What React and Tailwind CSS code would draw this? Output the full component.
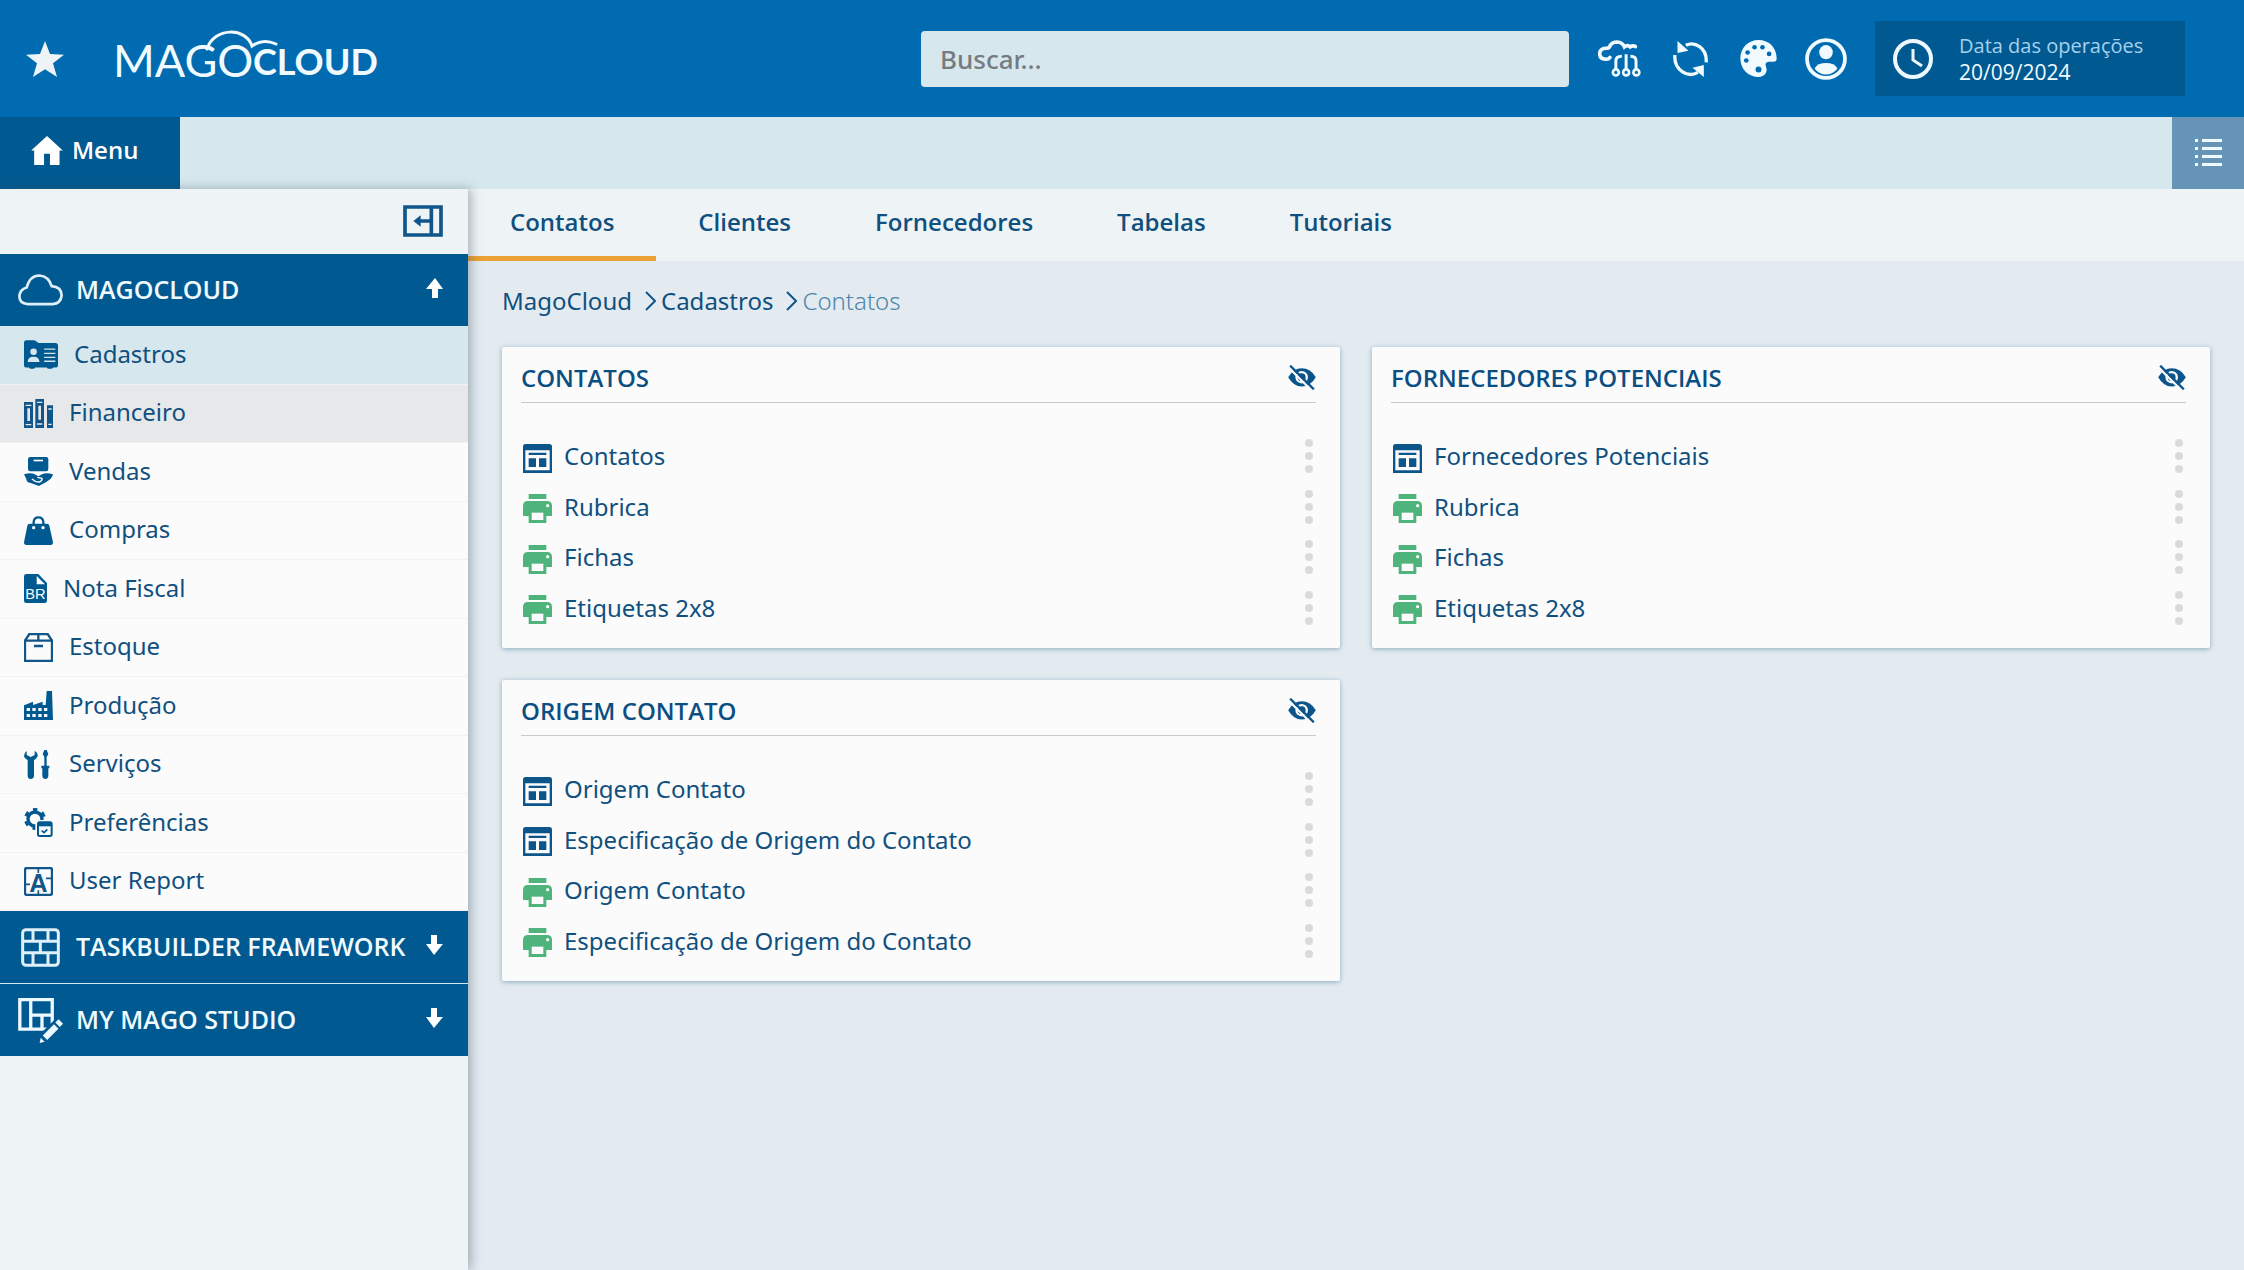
import React, { useState } from 'react';

const StarIcon = () => (
  <svg viewBox="0 0 114 108" className="w-[38px] h-9" fill="#eef3f6">
    <path d="M57 0 72 39 114 41 81 67 93 108 57 85 21 108 33 67 0 41 42 39Z" />
  </svg>
);

const Logo = () => (
  <svg viewBox="0 0 280 70" className="w-[280px] h-[70px]" role="img" aria-label="MagoCloud">
    <g fill="#f1fbff" fontFamily="Lato, sans-serif">
      <text x="3" y="53" fontSize="45" fontWeight="400">MAGO</text>
      <text x="143" y="51" fontSize="36" fontWeight="700">CLOUD</text>
    </g>
    <path
      d="M97 25C104 3 136 3 142 22Q153 14 166 20"
      fill="none"
      stroke="#f1fbff"
      strokeWidth="3"
      strokeLinecap="round"
    />
  </svg>
);

const CloudNetIcon = () => (
  <svg viewBox="0 0 130 110" className="w-[43px] h-[37px]" fill="none" stroke="#f1fbff" strokeWidth="11" strokeLinecap="round">
    <path d="M36 52Q32 58 22 57Q5 56 5 40Q6 24 25 24Q34 24 36 17Q42 5 58 5Q74 6 80 20Q90 12 97 20Q106 14 113 19" />
    <path strokeWidth="9" strokeLinecap="butt" d="M54 88V62Q54 48 72 48M85 42V88M98 48Q115 48 115 62V88" />
    <g strokeWidth="8">
      <circle cx="54" cy="97" r="9" />
      <circle cx="85" cy="97" r="9" />
      <circle cx="116" cy="97" r="9" />
    </g>
  </svg>
);

const SyncIcon = () => (
  <svg viewBox="0 0 104 108" className="w-[35px] h-9">
    <path d="M38 13C64 0 102 20 99 64M5 42C2 88 44 112 74 94" fill="none" stroke="#f1fbff" strokeWidth="10" />
    <path d="M13 0V36L46 29ZM92 108V72L58 80Z" fill="#f1fbff" />
  </svg>
);

const PaletteIcon = () => (
  <svg viewBox="0 0 110 112" className="w-[37px] h-[37px]">
    <path fill="#f1fbff" d="M55 0C88 0 110 24 110 56Q110 66 100 66H86Q72 68 78 82C84 98 72 112 56 112C24 112 0 88 0 56C0 24 24 0 55 0Z" />
    <g fill="#006bb0">
      <circle cx="22" cy="38" r="7" />
      <circle cx="43" cy="22" r="7" />
      <circle cx="67" cy="22" r="7" />
      <circle cx="87" cy="42" r="7" />
      <circle cx="18" cy="62" r="7" />
      <circle cx="55" cy="89" r="9" />
    </g>
  </svg>
);

const UserIcon = () => (
  <svg viewBox="0 0 124 124" className="w-[42px] h-[42px]" fill="#f1fbff">
    <circle cx="62" cy="62" r="56" fill="none" stroke="#f1fbff" strokeWidth="11" />
    <ellipse cx="62" cy="42" rx="20" ry="21" />
    <path d="M28 90Q38 74 62 74Q86 74 96 90Q82 108 62 108Q42 108 28 90Z" />
  </svg>
);

const ClockIcon = () => (
  <svg viewBox="0 0 40 40" className="w-10 h-10" fill="none" stroke="#eef8ff" strokeWidth="4">
    <circle cx="20" cy="20" r="18" />
    <path strokeWidth="3" d="M20 10V21L29 27" />
  </svg>
);

const HomeIcon = () => (
  <svg viewBox="0 0 96 88" className="w-8 h-[29px]" fill="#fff">
    <path d="M48 0 96 44H86V88H57V54H39V88H9V44H0Z" />
  </svg>
);

const ListIcon = () => (
  <svg viewBox="0 0 27 27" className="w-[27px] h-[27px]" fill="#f1fbff">
    <path d="M0 0h3v3H0zM7 0h20v3H7zM0 8h3v3H0zM7 8h20v3H7zM0 16h3v3H0zM7 16h20v3H7zM0 24h3v3H0zM7 24h20v3H7z" />
  </svg>
);

const CollapseIcon = () => (
  <svg viewBox="0 0 120 96" className="w-10 h-8">
    <path d="M6 6H114V90H6ZM85 6V90" fill="none" stroke="#10568a" strokeWidth="11" />
    <path d="M31 48 53 31V43H82V53H53V65Z" fill="#10568a" />
  </svg>
);

const CloudIcon = () => (
  <svg viewBox="0 0 135 95" className="w-[45px] h-8 shrink-0" fill="none" stroke="#dff0fa" strokeWidth="8">
    <path d="M29 90Q4 88 4 65Q6 46 26 40Q36 4 64 4Q92 6 101 36Q130 38 131 64Q128 88 104 90Z" />
  </svg>
);

const BricksIcon = () => (
  <svg viewBox="0 0 117 117" className="w-[39px] h-[39px] mx-[3px] shrink-0" fill="none" stroke="#dff0fa" strokeWidth="9">
    <rect x="5" y="5" width="107" height="107" rx="10" />
    <path d="M4 40H113M4 74H113M36 4V40M81 4V40M58 40V74M36 74V113M81 74V113" />
  </svg>
);

const StudioIcon = () => (
  <svg viewBox="0 0 135 136" className="w-[45px] h-[45px] shrink-0" fill="none" stroke="#eef8ff" strokeWidth="10">
    <path d="M5 5H103V94H5ZM38 5V94M38 52H103M72 52V94" />
    <path d="M64 134 128 70" stroke="#005a91" strokeWidth="32" />
    <path d="M81 120 115 86" strokeWidth="19" />
    <path d="M119 81 129 71" strokeWidth="19" />
    <path d="M65 136 68 120 80 132Z" fill="#eef8ff" stroke="none" />
  </svg>
);

const ArrowIcon = ({ up }) => (
  <svg viewBox="0 0 17 20" className={up ? 'w-[17px] h-5' : 'w-[17px] h-5 rotate-180'} fill="#fff">
    <path d="M9 0 17 11H12V20H6V11H0Z" />
  </svg>
);

const CadastrosIcon = () => (
  <svg viewBox="0 0 103 87" className="w-[34px] h-[29px]" fill="#005a91">
    <path d="M6 0H32L44 9H95Q103 9 103 17V75Q103 83 95 83H88Q86 87 82 87H76Q70 87 69 83H34Q32 87 28 87H22Q16 87 15 83H8Q0 83 0 75V8Q0 0 6 0Z" />
    <g fill="#d6e7ee">
      <circle cx="29" cy="35" r="10" />
      <path d="M11 66Q12 50 29 50Q46 50 47 66Z" />
      <path d="M61 25h34v4H61zM61 38h34v4H61zM61 50h34v4H61zM61 62h34v4H61z" />
    </g>
  </svg>
);

const FinanceiroIcon = () => (
  <svg viewBox="0 0 87 87" className="w-[29px] h-[29px]" fill="#10568a">
    <path d="M0 9H27V87H0ZM34 0H60V87H34ZM69 19H87V87H69Z" />
    <path fill="#e6e8ea" d="M5 17h17v4H5zM10 28h8v38h-8zM5 75h17v4H5zM39 8h16v4H39zM43 20h8v42h-8zM39 73h16v4H39zM73 28h10v4H73zM73 74h10v4H73z" />
  </svg>
);

const VendasIcon = () => (
  <svg viewBox="0 0 87 87" className="w-[29px] h-[29px]" fill="#005a91">
    <rect x="12" y="0" width="61" height="43" rx="7" />
    <rect x="29" y="8" width="28" height="5" fill="#fbfbfc" />
    <path d="M0 52Q22 46 32 52L43 58L54 52Q66 46 87 52Q84 66 68 74L45 87L18 77Q8 77 7 66Z" />
    <path d="M24 66Q34 76 46 75Q55 72 54 64L40 61" fill="none" stroke="#fbfbfc" strokeWidth="4" />
  </svg>
);

const ComprasIcon = () => (
  <svg viewBox="0 0 87 87" className="w-[29px] h-[29px]" fill="#005a91">
    <path d="M29 28V18Q30 4 43 4Q57 4 58 18V28" fill="none" stroke="#005a91" strokeWidth="7" />
    <path d="M17 23H69Q75 23 76 29L87 79Q87 87 80 87H7Q0 87 0 79L10 29Q11 23 17 23Z" />
    <circle cx="29" cy="35" r="5" fill="#fbfbfc" />
    <circle cx="57" cy="35" r="5" fill="#fbfbfc" />
  </svg>
);

const NotaFiscalIcon = () => (
  <svg viewBox="0 0 69 87" className="w-[23px] h-[29px]" fill="#005a91">
    <path d="M7 0H43L69 27V80Q69 87 62 87H7Q0 87 0 80V7Q0 0 7 0Z" />
    <path d="M38 6V31H63Z" fill="#fbfbfc" />
    <text x="4" y="75" fontSize="44" fontFamily="'Liberation Sans', sans-serif" fill="#fbfbfc">BR</text>
  </svg>
);

const EstoqueIcon = () => (
  <svg viewBox="0 0 87 87" className="w-[29px] h-[29px]" fill="none" stroke="#10568a" strokeWidth="7">
    <path d="M3 23H84V84H3ZM3 23 16 3H71L84 23M43 3V23M30 39H57" />
  </svg>
);

const ProducaoIcon = () => (
  <svg viewBox="0 0 87 87" className="w-[29px] h-[29px]" fill="#005a91">
    <path d="M0 43 27 32V42L56 32V42H65L68 0H84L87 87H0Z" />
    <path fill="#fbfbfc" d="M8 51h10v9H8zM25 51h10v9H25zM43 51h10v9H43zM60 51h10v9H60zM8 69h10v9H8zM25 69h10v9H25zM43 69h10v9H43zM60 69h10v9H60z" />
  </svg>
);

const ServicosIcon = () => (
  <svg viewBox="0 0 87 87" className="w-[29px] h-[29px]" fill="#005a91">
    <path d="M8 3V15L20 21L32 15V3Q42 8 41 19Q39 26 30 31V78Q29 87 20 87Q12 87 11 78V31Q1 26 0 19Q0 8 8 3Z" />
    <path d="M61 0H68L73 12L68 21V47H76V55H73V78Q72 87 64 87Q56 87 55 78V55H52V47H61V21L56 12Z" />
  </svg>
);

const PreferenciasIcon = () => (
  <svg viewBox="0 0 87 87" className="w-[29px] h-[29px]" fill="none" stroke="#005a91">
    <circle cx="33" cy="33" r="21" strokeWidth="10" />
    <circle cx="33" cy="33" r="28" strokeWidth="10" strokeDasharray="14 15.3" strokeDashoffset="7" transform="rotate(-90 33 33)" />
    <rect x="34" y="36" width="53" height="51" fill="#fbfbfc" stroke="none" />
    <rect x="42" y="43" width="41" height="41" rx="5" strokeWidth="6" />
    <path d="M42 50H83" strokeWidth="10" />
    <path d="M53 68 60 74 70 64" strokeWidth="5" />
  </svg>
);

const UserReportIcon = () => (
  <svg viewBox="0 0 87 87" className="w-[29px] h-[29px]" fill="none" stroke="#10568a" strokeWidth="7">
    <rect x="3" y="3" width="81" height="81" rx="6" />
    <path strokeWidth="5" d="M43 3V18M43 70V84M3 52H18M66 34H84" />
    <text x="43" y="74" textAnchor="middle" fontSize="76" fontWeight="700" fontFamily="'Liberation Sans', sans-serif" fill="#10568a" stroke="none">A</text>
  </svg>
);

const FormIcon = () => (
  <svg viewBox="0 0 87 87" className="w-[29px] h-[29px] shrink-0" fill="#0b558b">
    <path fillRule="evenodd" d="M8 0H79Q87 0 87 8V87H0V8Q0 0 8 0ZM7 19V79H80V19Z" />
    <path d="M17 26h53v7H17zM17 43h22v26H17zM48 43h22v26H48z" />
  </svg>
);

const PrintIcon = () => (
  <svg viewBox="0 0 87 87" className="w-[29px] h-[29px] shrink-0" fill="#4fb37c">
    <path d="M17 0H70V15H17ZM15 21H72Q87 21 87 36V66H70V87H17V66H0V36Q0 21 15 21Z" />
    <path fill="#fbfbfc" d="M26 56h35v22H26z" />
    <circle cx="74" cy="35" r="5" fill="#fbfbfc" />
  </svg>
);

const HideIcon = () => (
  <svg viewBox="0 0 84 76" className="w-7 h-[25px]">
    <path d="M0 37Q16 10 41 10Q68 10 84 37Q68 65 41 65Q16 65 0 37Z" fill="#0b558b" />
    <circle cx="41" cy="37" r="19" fill="#fbfbfc" />
    <circle cx="41" cy="37" r="12" fill="#0b558b" />
    <path d="M0 6 70 76" stroke="#fbfbfc" strokeWidth="7" />
    <path d="M6 2 78 74" stroke="#0b558b" strokeWidth="7" />
  </svg>
);

const DotsIcon = () => (
  <svg viewBox="0 0 8 34" className="w-2 h-[34px]" fill="#d9dadb">
    <circle cx="4" cy="4" r="4" />
    <circle cx="4" cy="17" r="4" />
    <circle cx="4" cy="30" r="4" />
  </svg>
);

const ChevronIcon = () => (
  <svg viewBox="0 0 11 20" className="w-[11px] h-5" fill="none" stroke="#10568a" strokeWidth="2">
    <path d="M1 1 10 10 1 19" />
  </svg>
);

const menuItems = [
  { label: 'Cadastros', icon: CadastrosIcon, state: 'active' },
  { label: 'Financeiro', icon: FinanceiroIcon, state: 'hover' },
  { label: 'Vendas', icon: VendasIcon },
  { label: 'Compras', icon: ComprasIcon },
  { label: 'Nota Fiscal', icon: NotaFiscalIcon },
  { label: 'Estoque', icon: EstoqueIcon },
  { label: 'Produção', icon: ProducaoIcon },
  { label: 'Serviços', icon: ServicosIcon },
  { label: 'Preferências', icon: PreferenciasIcon },
  { label: 'User Report', icon: UserReportIcon },
];

const itemBg = {
  active: 'bg-[#d6e7ee]',
  hover: 'bg-[#e6e8ea]',
};

const tabs = ['Contatos', 'Clientes', 'Fornecedores', 'Tabelas', 'Tutoriais'];

const cards = [
  {
    title: 'CONTATOS',
    items: [
      { label: 'Contatos', type: 'form' },
      { label: 'Rubrica', type: 'report' },
      { label: 'Fichas', type: 'report' },
      { label: 'Etiquetas 2x8', type: 'report' },
    ],
  },
  {
    title: 'FORNECEDORES POTENCIAIS',
    items: [
      { label: 'Fornecedores Potenciais', type: 'form' },
      { label: 'Rubrica', type: 'report' },
      { label: 'Fichas', type: 'report' },
      { label: 'Etiquetas 2x8', type: 'report' },
    ],
  },
  {
    title: 'ORIGEM CONTATO',
    items: [
      { label: 'Origem Contato', type: 'form' },
      { label: 'Especificação de Origem do Contato', type: 'form' },
      { label: 'Origem Contato', type: 'report' },
      { label: 'Especificação de Origem do Contato', type: 'report' },
    ],
  },
];

const Header = () => (
  <header className="flex items-center h-[117px] bg-[#006bb0] pl-[26px] pr-[59px]">
    <button type="button" aria-label="Favoritos"><StarIcon /></button>
    <a href="#" className="ml-[46px]"><Logo /></a>
    <input
      type="search"
      aria-label="Buscar"
      placeholder="Buscar..."
      className="ml-auto w-[648px] h-14 px-[19px] rounded bg-[#d6e7ee] font-['Noto_Sans',sans-serif] text-[26px] font-medium text-[#10568a] placeholder:text-[#757b80] outline-none"
    />
    <div className="flex items-center ml-[29px] gap-8">
      <button type="button" aria-label="Conexões"><CloudNetIcon /></button>
      <button type="button" aria-label="Atualizar"><SyncIcon /></button>
      <button type="button" aria-label="Temas"><PaletteIcon /></button>
      <button type="button" aria-label="Usuário" className="-ml-1"><UserIcon /></button>
    </div>
    <button type="button" className="flex items-center ml-7 w-[310px] h-[75px] px-[18px] gap-[26px] bg-[#005a91] text-left">
      <ClockIcon />
      <span className="flex flex-col leading-[26px]">
        <span className="text-xl leading-[26px] text-[#a5d0ee]">Data das operações</span>
        <span className="text-[21px] text-[#f1fbff]">20/09/2024</span>
      </span>
    </button>
  </header>
);

const GroupButton = ({ label, icon: Icon, open, onClick }) => (
  <button
    type="button"
    aria-expanded={open}
    onClick={onClick}
    className="flex items-center w-full h-[72px] pl-[18px] pr-[25px] gap-[13px] bg-[#005a91] text-[25px] font-semibold text-[#f1fbff]"
  >
    <Icon />
    <span className="whitespace-nowrap">{label}</span>
    <span className="ml-auto pb-1"><ArrowIcon up={open} /></span>
  </button>
);

const Sidebar = () => {
  const [open, setOpen] = useState(true);

  return (
    <aside className="relative z-10 w-[468px] shrink-0 bg-[#eef3f6] shadow-[3px_0_10px_rgba(60,80,90,0.4)]">
      <div className="flex items-center justify-end h-[65px] pr-[25px] pb-[2px]">
        <button type="button" aria-label="Recolher menu"><CollapseIcon /></button>
      </div>
      <GroupButton label="MAGOCLOUD" icon={CloudIcon} open={open} onClick={() => setOpen(!open)} />
      {open && (
        <nav className="grid auto-rows-fr min-h-[585px] bg-[#fbfbfc]">
          {menuItems.map(({ label, icon: Icon, state }) => (
            <a
              key={label}
              href="#"
              className={`flex items-center gap-4 pl-6 border-b border-[#f0f2f4] font-['Noto_Sans',sans-serif] text-2xl font-[450] text-[#10507f] ${itemBg[state] ?? ''}`}
            >
              <Icon />
              <span className="pb-[2px]">{label}</span>
            </a>
          ))}
        </nav>
      )}
      <GroupButton label="TASKBUILDER FRAMEWORK" icon={BricksIcon} open={false} />
      <div className="border-t border-[#d6e7ee]">
        <GroupButton label="MY MAGO STUDIO" icon={StudioIcon} open={false} />
      </div>
    </aside>
  );
};

const Card = ({ title, items }) => (
  <section className="pl-[19px] pr-6 pb-[13px] rounded-xs bg-[#fbfbfc] shadow-[0_1px_5px_rgba(0,70,110,0.4)]">
    <div className="flex items-center justify-between h-14 pt-[6px] border-b border-[#c5cbd0]">
      <h2 className="text-2xl font-semibold text-[#0b4f82]">{title}</h2>
      <button type="button" aria-label={`Ocultar ${title}`}><HideIcon /></button>
    </div>
    <ul className="grid auto-rows-fr min-h-[232px] pt-[30px]">
      {items.map((item) => (
        <li key={item.type + item.label} className="flex items-center justify-between pl-[2px] pr-[3px]">
          <a href="#" className="flex items-center gap-3 font-['Noto_Sans',sans-serif] text-2xl font-[450] text-[#10507f]">
            {item.type === 'form' ? <FormIcon /> : <PrintIcon />}
            <span className="pb-1">{item.label}</span>
          </a>
          <button type="button" aria-label={`Opções de ${item.label}`} className="pb-1"><DotsIcon /></button>
        </li>
      ))}
    </ul>
  </section>
);

function App() {
  const [activeTab, setActiveTab] = useState('Contatos');

  return (
    <div className="flex flex-col min-h-screen bg-[#e3ebf1] font-['Open_Sans',sans-serif]">
      <Header />
      <div className="flex items-stretch justify-between h-[72px] bg-[#d6e7ee]">
        <button type="button" className="flex items-center gap-[9px] w-[180px] pl-[31px] pb-[6px] bg-[#005a91] text-2xl font-semibold text-white">
          <HomeIcon />
          Menu
        </button>
        <button type="button" aria-label="Abas abertas" className="flex items-center justify-center w-[72px] pb-[2px] bg-[#6594b7]">
          <ListIcon />
        </button>
      </div>

      <div className="flex flex-1">
        <Sidebar />
        <main className="flex-1">
          <div className="flex h-[72px] bg-[#eef3f6]">
            {tabs.map((tab) => (
              <button
                key={tab}
                type="button"
                onClick={() => setActiveTab(tab)}
                className={`px-[42px] pb-[2px] border-b-5 text-2xl font-semibold text-[#10507f] ${activeTab === tab ? 'border-[#eba134]' : 'border-transparent'}`}
              >
                {tab}
              </button>
            ))}
          </div>

          <nav aria-label="Trilha" className="flex items-center h-[86px] px-[34px] pb-[6px] gap-[5px] font-['Noto_Sans',sans-serif] text-2xl font-[450] text-[#10507f]">
            <a href="#" className="pr-2">MagoCloud</a>
            <ChevronIcon />
            <a href="#" className="pr-2">Cadastros</a>
            <ChevronIcon />
            <span className="font-light text-[#4d86ab]">Contatos</span>
          </nav>

          <div className="grid grid-cols-2 gap-8 px-[34px] pb-8 items-start">
            {cards.map((card) => (
              <Card key={card.title} title={card.title} items={card.items} />
            ))}
          </div>
        </main>
      </div>
    </div>
  );
}

export default App;
